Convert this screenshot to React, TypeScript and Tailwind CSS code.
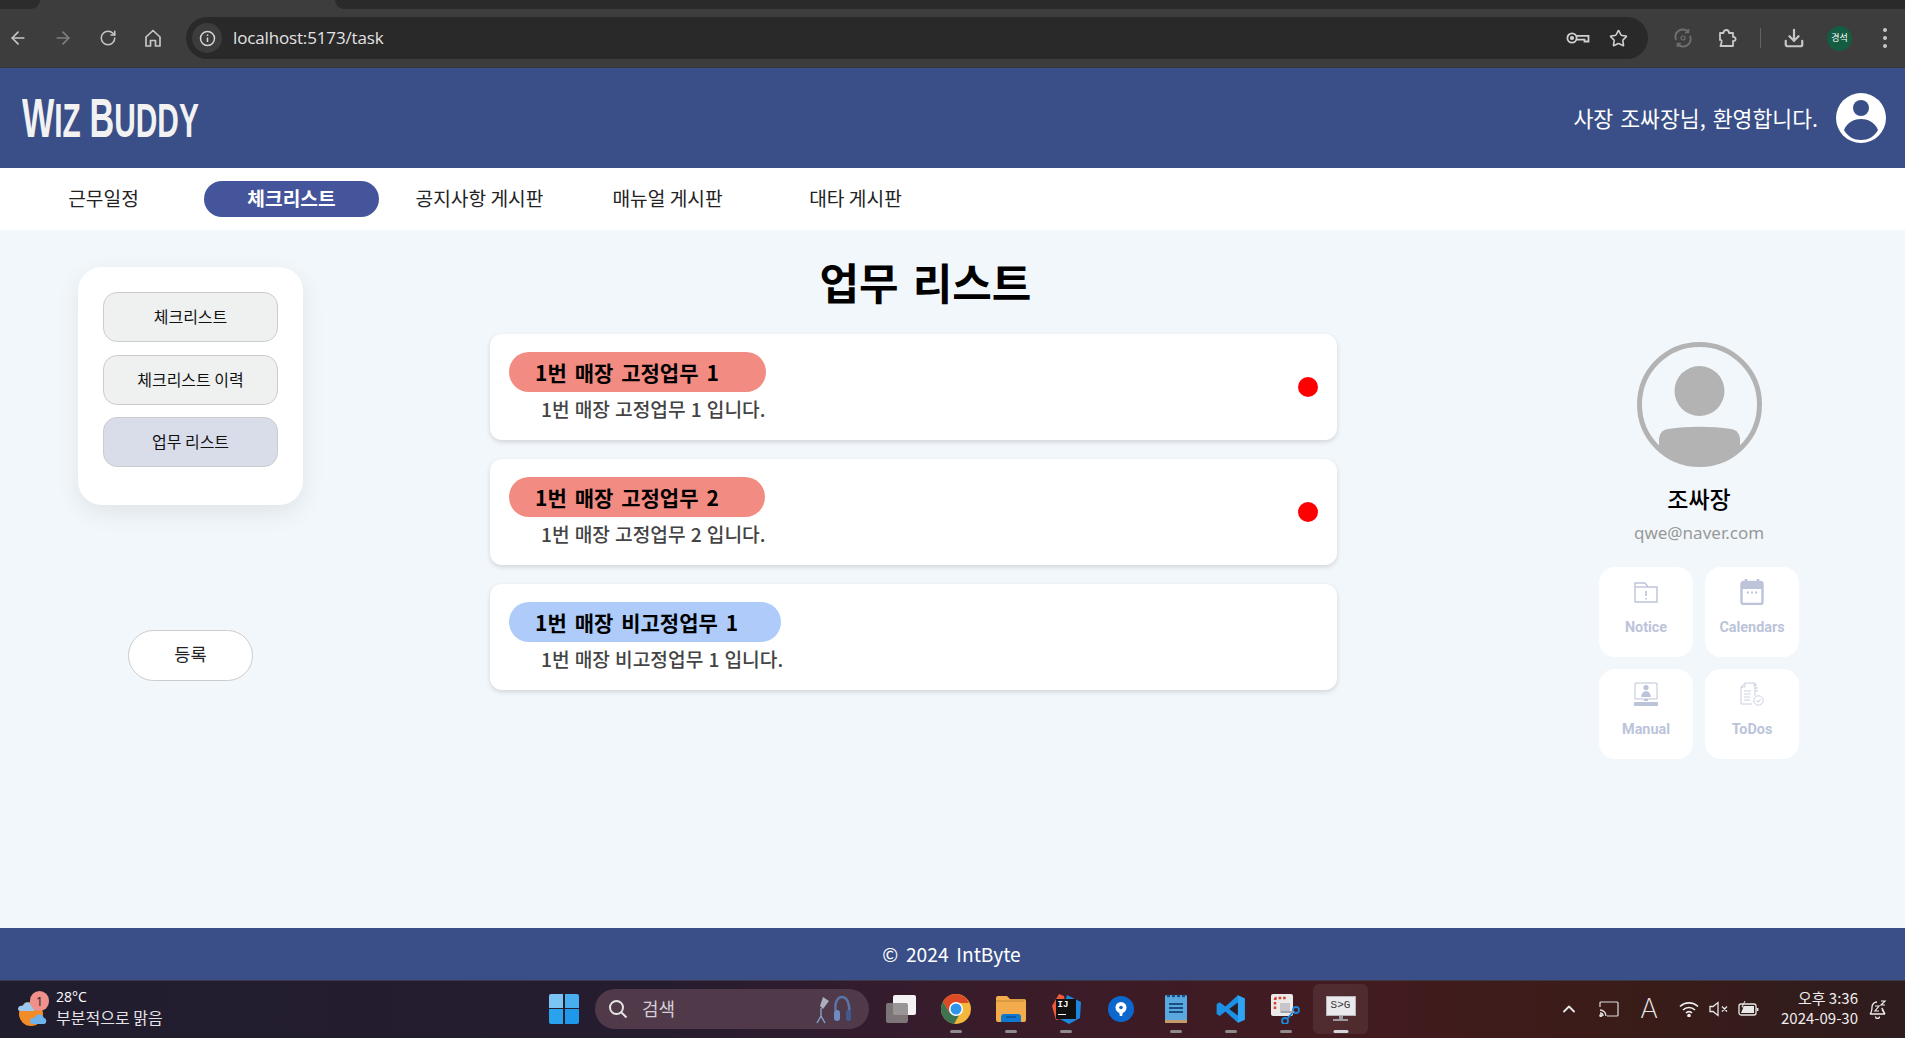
import React from "react";
import { ArrowLeft, ArrowRight, RotateCw, Star, Download, ChevronUp } from "lucide-react";

const KR = "font-['Noto_Sans_CJK_KR','Noto_Sans',sans-serif]";

function HomeIcon() {
  return (
    <svg width="18" height="20" viewBox="0 0 18 20" fill="none" stroke="#c7c7c7" strokeWidth="1.7">
      <path d="M2 9 9 2.5 16 9v9h-4.5v-5.5h-5V18H2z" strokeLinejoin="round" />
    </svg>
  );
}

function Chrome() {
  return (
    <div className="h-[68px] shrink-0 flex flex-col bg-[#3c3d3c] border-b border-[#35373c]">
      <div className="h-[9px] flex">
        <div className="w-[40px] bg-[#2c2c2c] rounded-br-xl" />
        <div className="w-[295px]" />
        <div className="flex-1 bg-[#2a2a2a] rounded-bl-xl" />
      </div>
      <div className="flex-1 flex items-center relative">
        <div className="w-[186px] flex items-center pl-[8px] text-[#c7c7c7] pb-[1px]">
          <ArrowLeft size={20} strokeWidth={2} />
          <ArrowRight size={20} strokeWidth={2} className="ml-[25px] text-[#7f7f7f]" />
          <RotateCw size={18} strokeWidth={2} className="ml-[26px]" />
          <div className="ml-[27px]"><HomeIcon /></div>
        </div>
        <div className="w-[1462px] h-[42px] bg-[#292929] rounded-full flex items-center pl-[6px]">
          <div className="w-[30px] h-[30px] rounded-full bg-[#3c3c3c] flex items-center justify-center">
            <svg width="17" height="17" viewBox="0 0 17 17" fill="none" stroke="#d5d5d5" strokeWidth="1.5">
              <circle cx="8.5" cy="8.5" r="7" />
              <path d="M8.5 7.5v4.5M8.5 4.5v1.4" />
            </svg>
          </div>
          <span className="ml-[11px] text-[17px] text-[#e3e3e3] font-['Open_Sans',sans-serif] tracking-[-0.15px]">localhost:5173/task</span>
          <div className="ml-auto flex items-center gap-[19px] pr-[20px]">
            <svg width="24" height="14" viewBox="0 0 24 14" fill="none" stroke="#d0d0d0" strokeWidth="1.8">
              <circle cx="6" cy="7" r="4.6" />
              <circle cx="6" cy="7" r="1.2" fill="#d0d0d0" />
              <path d="M10.5 4.8H22.5V10.5H18.5V8.6H10.5" />
            </svg>
            <Star size={19} className="text-[#d0d0d0]" strokeWidth={2} />
          </div>
        </div>
        <div className="flex items-center text-[#c7c7c7]">
          <svg className="ml-[25px]" width="20" height="20" viewBox="0 0 20 20" fill="none" stroke="#6e6e6e" strokeWidth="2">
            <path d="M3 12A7.5 7.5 0 0 1 15.500 4M17 8a7.500 7.500 0 0 1-12.500 8" />
            <path d="M15.500 1v3.500H12M4.500 19v-3.500H8" strokeWidth="1.600" />
            <circle cx="10" cy="10" r="2" strokeWidth="1.200" />
          </svg>
          <svg className="ml-[25px]" width="20" height="20" viewBox="0 0 20 20" fill="none" stroke="#c7c7c7" strokeWidth="1.800" strokeLinejoin="round">
            <path d="M2 5h3.500c0-4 5.500-4 5.500 0H15v4c3.500-.5 3.500 4.500 0 4v5H2.500l1-3.500c.8-2.800-.8-2.800-1.500-2.500z" />
          </svg>
          <div className="ml-[22px] w-[1px] h-[20px] bg-[#6b5f5f]" />
          <Download size={22} strokeWidth={2.400} className="ml-[22px]" />
          <div className={`ml-[22px] w-[25px] h-[25px] rounded-full bg-[#145c42] flex items-center justify-center text-[9px] text-white ${KR}`}>경석</div>
          <div className="ml-[31px] flex flex-col gap-[4px]">
            <span className="w-[4px] h-[4px] rounded-full bg-[#c7c7c7]" />
            <span className="w-[4px] h-[4px] rounded-full bg-[#c7c7c7]" />
            <span className="w-[4px] h-[4px] rounded-full bg-[#c7c7c7]" />
          </div>
        </div>
      </div>
    </div>
  );
}

function Header() {
  return (
    <header className="h-[100px] shrink-0 bg-[#3a4f87] flex items-center text-white">
      <div className="ml-[22px] w-[174px] shrink-0">
        <div className="w-max origin-left scale-x-[0.622] flex items-baseline leading-none font-['Liberation_Sans',sans-serif] font-bold text-[#f2f2f2]">
          <span className="text-[55px]">W</span>
          <span className="text-[48px]">IZ</span>
          <span className="text-[55px] ml-[14px]">B</span>
          <span className="text-[48px]">UDDY</span>
        </div>
      </div>
      <div className="ml-auto flex items-center mr-[19px]">
        <span className={`text-[21.6px] [word-spacing:0.1em] ${KR}`}>사장 조싸장님, 환영합니다.</span>
        <svg className="ml-[18px]" width="50" height="50" viewBox="0 0 50 50">
          <circle cx="25" cy="25" r="25" fill="#fff" />
          <circle cx="25" cy="15" r="8" fill="#3a4f87" />
          <path d="M8 37c3-8 11-11 17-11s14 3 17 11c-4 7-10 10-17 10S12 44 8 37z" fill="#3a4f87" />
        </svg>
      </div>
    </header>
  );
}

function Nav() {
  const items = ["근무일정", "체크리스트", "공지사항 게시판", "매뉴얼 게시판", "대타 게시판"];
  return (
    <nav className={`h-[62px] shrink-0 bg-white flex items-center gap-[13px] pl-[16px] ${KR}`}>
      {items.map((t, i) => (
        <div
          key={t}
          className={
            i === 1
              ? "w-[175px] h-[36px] pb-[2px] rounded-full bg-[#45559b] text-white font-bold text-[19.2px] flex items-center justify-center"
              : "w-[175px] h-[36px] pb-[2px] text-[#222] text-[19.2px] flex items-center justify-center"
          }
        >
          {t}
        </div>
      ))}
    </nav>
  );
}

function SideButton({ children, active, className }: { children: React.ReactNode; active?: boolean; className?: string }) {
  return (
    <div
      className={`w-[175px] h-[50px] pb-[3px] rounded-[14px] border border-[#cccccc] flex items-center justify-center text-[16px] text-[#111] ${
        active ? "bg-[#d9dde9]" : "bg-[#eff1f1]"
      } ${className ?? ""}`}
    >
      {children}
    </div>
  );
}

function Sidebar() {
  return (
    <aside className={`w-[225px] shrink-0 pt-[37px] ${KR}`}>
      <div className="h-[238px] rounded-[24px] bg-white shadow-[0_8px_24px_rgba(0,0,0,0.08)] pt-[25px] pl-[25px]">
        <SideButton className="mb-[13px]">체크리스트</SideButton>
        <SideButton className="mb-[12px]">체크리스트 이력</SideButton>
        <SideButton active>업무 리스트</SideButton>
      </div>
      <div className="mt-[125px] mx-auto w-[125px] h-[51px] pb-[2px] rounded-full bg-white border border-[#cccccc] flex items-center justify-center text-[17.6px] text-[#222]">
        등록
      </div>
    </aside>
  );
}

function TaskCard({ title, desc, color, dot, pad }: { title: string; desc: string; color: string; dot?: boolean; pad: string }) {
  return (
    <div className="h-[106px] rounded-[12px] bg-white shadow-[0_2px_5px_rgba(0,0,0,0.14)] pl-[19px] pr-[19px] pt-[18px] flex items-center">
      <div className="self-start flex flex-col items-start">
        <div className={`h-[40px] pl-[26px] pt-[1px] rounded-full flex items-center text-[21px] [word-spacing:0.15em] font-bold text-black ${pad} ${color}`}>{title}</div>
        <div className="mt-[5px] pl-[32px] text-[19.2px] leading-[24px] [word-spacing:0.04em] font-medium text-[#444]">{desc}</div>
      </div>
      {dot && <div className="ml-auto mb-[18px] w-[20px] h-[20px] rounded-full bg-[#ff0000]" />}
    </div>
  );
}

function Center() {
  return (
    <section className={`w-[847px] shrink-0 ml-[187px] ${KR}`}>
      <h1 className="h-[104px] pl-[24px] pb-[2px] flex items-center justify-center text-[43px] [word-spacing:0.1em] font-bold text-black">업무 리스트</h1>
      <div className="flex flex-col gap-[19px]">
        <TaskCard title="1번 매장 고정업무 1" desc="1번 매장 고정업무 1 입니다." color="bg-[#f28b82]" pad="pr-[47px]" dot />
        <TaskCard title="1번 매장 고정업무 2" desc="1번 매장 고정업무 2 입니다." color="bg-[#f28b82]" pad="pr-[46px]" dot />
        <TaskCard title="1번 매장 비고정업무 1" desc="1번 매장 비고정업무 1 입니다." color="bg-[#aecbfa]" pad="pr-[43px]" />
      </div>
    </section>
  );
}

const ICON = "#bcc4d9";

function NoticeIcon() {
  return (
    <svg width="24" height="24" viewBox="0 0 24 24" fill="none" stroke={ICON} strokeWidth="1.4">
      <path d="M1 22V3h10l3 4h9v15z" />
      <path d="M1 7h13" />
      <path d="M12 11v5M12 18v1.5" strokeWidth="1.6" />
    </svg>
  );
}
function CalendarIcon() {
  return (
    <svg width="24" height="26" viewBox="0 0 24 26" fill="none">
      <rect x="1.5" y="3" width="21" height="22" rx="2" stroke={ICON} strokeWidth="2.4" />
      <path d="M1.5 4h21v6h-21z" fill={ICON} />
      <path d="M6 0v4M18 0v4" stroke={ICON} strokeWidth="2.4" />
      <path d="M7 13.5h2M11 13.5h2M15 13.5h2" stroke={ICON} strokeWidth="1.8" />
    </svg>
  );
}
function ManualIcon() {
  return (
    <svg width="24" height="24" viewBox="0 0 24 24" fill="none">
      <path d="M1 1h22v16H1z" stroke={ICON} strokeWidth="1" />
      <circle cx="12" cy="5.5" r="2.6" fill={ICON} />
      <path d="M7 15c.5-4 2.5-6 5-6s4.5 2 5 6z" fill={ICON} />
      <path d="M10 17h4v2h-4zM0 20h24v4H0z" fill={ICON} />
    </svg>
  );
}
function TodosIcon() {
  return (
    <svg width="24" height="24" viewBox="0 0 24 24" fill="none" stroke={ICON} strokeWidth="0.8">
      <path d="M15 14V1H5L1 5v17h11" />
      <path d="M1 5h4V1M4 9h7M4 12h7M4 15h6M4 18h6M13 3h4M15 6h3M15 9h3" />
      <circle cx="18.5" cy="18.5" r="4.7" fill="#fff" />
      <path d="m16.3 18.5 1.6 1.6 2.8-2.8" strokeWidth="1" />
    </svg>
  );
}

function Tile({ icon, label }: { icon: React.ReactNode; label: string }) {
  return (
    <div className="w-[94px] h-[90px] rounded-[16px] bg-white flex flex-col items-center pt-[11px]">
      <div className="h-[28px] flex items-center">{icon}</div>
      <div className="mt-[11px] text-[14.4px] font-bold text-[#bcc4d9] font-['Roboto',sans-serif]">{label}</div>
    </div>
  );
}

function Profile() {
  return (
    <aside className={`w-[200px] shrink-0 ml-[262px] pt-[112px] flex flex-col items-center ${KR}`}>
      <svg width="125" height="125" viewBox="0 0 125 125">
        <circle cx="62.5" cy="62.5" r="60" fill="none" stroke="#b3b3b3" strokeWidth="5" />
        <circle cx="62.5" cy="49" r="25" fill="#b3b3b3" />
        <path d="M22 105V98c0-6 3-10 9-11 20-3 43-3 63 0 6 1 9 5 9 11v7c-10 11-25 18-40.500 18S32 116 22 105z" fill="#b3b3b3" />
      </svg>
      <div className="mt-[15px] text-[23px] leading-[32px] font-medium text-black">조싸장</div>
      <div className="mt-[7px] text-[17px] leading-[24px] text-[#999] font-['Noto_Sans',sans-serif]">qwe@naver.com</div>
      <div className="mt-[22px] w-[200px] grid grid-cols-[94px_94px] gap-x-[12px] gap-y-[12px] justify-center">
        <Tile icon={<NoticeIcon />} label="Notice" />
        <Tile icon={<CalendarIcon />} label="Calendars" />
        <Tile icon={<ManualIcon />} label="Manual" />
        <Tile icon={<TodosIcon />} label="ToDos" />
      </div>
    </aside>
  );
}

function Main() {
  return (
    <main className="flex-1 min-h-0 bg-[#f2f7fb] flex pl-[78px]">
      <Sidebar />
      <Center />
      <Profile />
    </main>
  );
}

function Footer() {
  return (
    <footer className={`h-[52px] shrink-0 bg-[#3a4f87] flex items-center justify-center pr-[2px] text-white text-[19.2px] [word-spacing:0.18em] ${KR}`}>
      © 2024 IntByte
    </footer>
  );
}

function Weather() {
  return (
    <div className="relative w-[30px] h-[36px] ml-[17px]">
      <svg width="30" height="36" viewBox="0 0 30 36">
        <circle cx="14" cy="22" r="12" fill="#f28c28" />
        <path d="M1 17c0-3 3-4 5-3 1-5 7-5 9 0 3 0 4 3 2 5H3c-1 0-2-1-2-2z" fill="#9cc9ef" />
        <path d="M13 29c0-3 3-4 5-3 1-5 7-5 9 0 3 0 3 6 0 6H15c-1 0-2-2-2-3z" fill="#6fb3ec" />
      </svg>
      <div className="absolute -top-[1px] left-[13px] w-[19px] h-[20px] rounded-full bg-[#f0908a] text-[#222] text-[13px] leading-[20px] text-center font-['Open_Sans',sans-serif]">1</div>
    </div>
  );
}

function WinLogo() {
  return (
    <div className="grid grid-cols-2 gap-[1.5px] w-[30px] h-[30px]">
      <div className="bg-[#7cc4f3] rounded-tl-[2px]" />
      <div className="bg-[#49aef0] rounded-tr-[2px]" />
      <div className="bg-[#2aa3ef] rounded-bl-[2px]" />
      <div className="bg-[#1f97ea] rounded-br-[2px]" />
    </div>
  );
}

function Indicator({ active }: { active?: boolean }) {
  return <div className={`absolute left-1/2 -translate-x-1/2 bottom-[1px] h-[3px] rounded-full ${active ? "w-[15px] bg-[#d8d4dc]" : "w-[12px] bg-[#8f8a8c]"}`} />;
}

function TaskSlot({ children, on, active }: { children: React.ReactNode; on?: boolean; active?: boolean }) {
  return (
    <div className={`relative w-[55px] h-[50px] flex items-center justify-center rounded-[6px] ${active ? "bg-[#ffffff12]" : ""}`}>
      {children}
      {on && <Indicator active={active} />}
    </div>
  );
}

function ChromeLogo() {
  return (
    <svg width="30" height="30" viewBox="0 0 30 30">
      <circle cx="15" cy="15" r="15" fill="#f5b63c" />
      <path d="M15 0a15 15 0 0 0-12.990 7.500L8.500 18.700 15 9h13a15 15 0 0 0-13-9z" fill="#dd4b26" />
      <path d="M2 7.500a15 15 0 0 0 11 22.400l6.500-11.200L8.500 18.700z" fill="#3d7350" />
      <circle cx="15" cy="15" r="7" fill="#fff" />
      <circle cx="15" cy="15" r="5.500" fill="#2d95ea" />
    </svg>
  );
}

function Taskbar() {
  return (
    <div className="h-[58px] shrink-0 flex items-center text-white bg-[linear-gradient(90deg,#201d2e_0%,#261c30_35%,#361c2c_48%,#431b20_70%,#3a1c18_85%,#2e1c1e_100%)] border-t border-[#3d3a48] font-['Noto_Sans_CJK_KR',sans-serif]">
      <Weather />
      <div className="ml-[9px] mb-[4px] w-[130px] leading-none">
        <div className="text-[14px] text-white font-['Open_Sans',sans-serif]">28°C</div>
        <div className="mt-[5px] text-[16px] text-[#e6e2e6]">부분적으로 맑음</div>
      </div>
      <div className="ml-[363px] mb-[2px]"><WinLogo /></div>
      <div className="ml-[16px] mb-[2px] w-[274px] h-[40px] rounded-full bg-[#503a4a] flex items-center pl-[13px] relative">
        <svg width="20" height="20" viewBox="0 0 20 20" fill="none" stroke="#e5e5e5" strokeWidth="2">
          <circle cx="8.500" cy="8.500" r="6.500" />
          <path d="m13.500 13.500 5 5" />
        </svg>
        <span className="ml-[14px] text-[18px] text-[#d6d0d6]">검색</span>
        <svg className="ml-auto mr-[14px]" width="46" height="30" viewBox="0 0 46 30" fill="none">
          <path d="M14 3l6 4-6 8-3-3z" fill="#a9aec0" />
          <path d="M12 14v8M12 22l-4 7M12 22l4 7" stroke="#8ca5d8" strokeWidth="1.300" />
          <path d="M27 18c-2-8 1-15 6-15s8 7 7 15" stroke="#5a74a8" strokeWidth="2.500" />
          <rect x="25" y="16" width="6" height="11" rx="3" fill="#6f8bc4" />
          <rect x="37" y="16" width="5" height="11" rx="2.500" fill="#3f5a90" />
        </svg>
      </div>
      <div className="ml-[17px] mb-[2px] w-[30px] h-[28px] relative">
        <div className="absolute right-0 top-0 w-[23px] h-[20px] rounded-[2px] bg-[#f4f2f2]" />
        <div className="absolute left-0 bottom-0 w-[22px] h-[20px] rounded-[2px] bg-[#8a8585d9]" />
      </div>
      <div className="ml-[12px] mb-[2px] flex items-center">
        <TaskSlot on><ChromeLogo /></TaskSlot>
        <TaskSlot on>
          <svg width="30" height="26" viewBox="0 0 30 26">
            <path d="M0 2a2 2 0 0 1 2-2h9l3 3h14a2 2 0 0 1 2 2v19a2 2 0 0 1-2 2H2a2 2 0 0 1-2-2z" fill="#f4ab4c" />
            <path d="M0 4h14V3H28v3H0z" fill="#d99a42" />
            <path d="M5 26v-5a3 3 0 0 1 3-3h14a3 3 0 0 1 3 3v5z" fill="#0f78d0" />
            <path d="M10 21h10" stroke="#0b4f8f" strokeWidth="1.500" />
          </svg>
        </TaskSlot>
        <TaskSlot on>
          <div className="relative w-[30px] h-[30px]">
            <svg className="absolute inset-0" width="30" height="30" viewBox="0 0 30 30">
              <path d="M8 0 1 12l4 14 12-3L13 2z" fill="#ef5a3a" />
              <path d="M16 1 30 8l-1 16-11 6-9-5z" fill="#1b87dd" />
            </svg>
            <div className="absolute left-[5px] top-[5px] w-[20px] h-[20px] bg-[#111] text-white text-[9px] leading-[12px] font-bold pl-[2px] font-['Liberation_Mono',monospace]">
              IJ
              <div className="w-[8px] h-[1.500px] bg-white mt-[3px]" />
            </div>
          </div>
        </TaskSlot>
        <TaskSlot>
          <svg width="26" height="26" viewBox="0 0 26 26">
            <circle cx="13" cy="13" r="13" fill="#0c68cc" />
            <circle cx="13" cy="11.500" r="5.500" fill="#fff" />
            <circle cx="13" cy="11.500" r="1.800" fill="#0c68cc" />
            <path d="M11 15h4l-.8 5h-2.400z" fill="#fff" />
          </svg>
        </TaskSlot>
        <TaskSlot on>
          <svg width="22" height="30" viewBox="0 0 22 30">
            <rect x="0" y="1" width="22" height="28" rx="1.500" fill="#5aa8e0" />
            <path d="M0 26h22v3H0z" fill="#c59a6a" />
            <path d="M4 10h14M4 14h14M4 18h14" stroke="#1a4f80" strokeWidth="1.800" />
            <path d="M3 2h1M8 2h1M13 2h1M18 2h1" stroke="#1a4f80" strokeWidth="2.400" strokeLinecap="round" />
          </svg>
        </TaskSlot>
        <TaskSlot on>
          <svg width="30" height="30" viewBox="0 0 24 24">
            <path d="M17.500 1 23 3.500v17L17.500 23 7.500 14l-4.500 3.500L.5 16V8L3 6.500 7.500 10z" fill="#1c8fe6" />
            <path d="M17.500 1 23 3.500v17L17.500 23z" fill="#2fa4f2" />
            <path d="M17.500 6.800 10.500 12l7 5.200z" fill="#2b1b24" />
          </svg>
        </TaskSlot>
        <TaskSlot on>
          <svg width="30" height="30" viewBox="0 0 30 30" fill="none">
            <rect x="0" y="0" width="22" height="22" rx="2" fill="#ece9e9" />
            <path d="M4 15V6a2 2 0 0 1 2-2h9" stroke="#d8402c" strokeWidth="2.500" strokeDasharray="2.500 2" />
            <path d="M9 9h10v10H9z" fill="#c7c5c9" />
            <circle cx="25" cy="16" r="3" stroke="#1b87dd" strokeWidth="1.800" />
            <circle cx="14" cy="27" r="3" stroke="#1b87dd" strokeWidth="1.800" />
            <path d="M16 25 23 17" stroke="#1b87dd" strokeWidth="1.800" />
            <path d="M10 18h13" stroke="#9aa0a8" strokeWidth="1.800" />
          </svg>
        </TaskSlot>
        <TaskSlot on active>
          <div className="flex flex-col items-center">
            <div className="w-[30px] h-[20px] bg-[#e9e9ec] border-[1.500px] border-[#b5b5bb] text-[#333] text-[11px] leading-[17px] text-center font-['Liberation_Mono',monospace]">S&gt;G</div>
            <div className="w-[4px] h-[3px] bg-[#9a9aa0]" />
            <div className="w-[15px] h-[2px] bg-[#9a9aa0]" />
          </div>
        </TaskSlot>
      </div>
      <ChevronUp size={20} strokeWidth={2.200} className="ml-[191px] mb-[2px] text-[#e8e8e8]" />
      <svg className="ml-[20px] mb-[2px]" width="20" height="16" viewBox="0 0 20 16" fill="none" stroke="#dedede" strokeWidth="1.200">
        <path d="M1 6V2a1 1 0 0 1 1-1h16a1 1 0 0 1 1 1v12a1 1 0 0 1-1 1H8" />
        <path d="M1 9a6 6 0 0 1 6 6M1 12a3 3 0 0 1 3 3" strokeWidth="1.400" />
        <circle cx="1.800" cy="14.500" r="1" fill="#dedede" />
      </svg>
      <span className="ml-[20px] mb-[2px] w-[20px] text-center text-[27px] leading-none text-[#e8e8e8] font-['Inter',sans-serif] font-extralight">A</span>
      <svg className="ml-[20px] mb-[2px]" width="20" height="16" viewBox="0 0 20 16" fill="none" stroke="#f0f0f0" strokeWidth="1.600">
        <path d="M1 5.500a13 13 0 0 1 18 0M4 9a8.500 8.500 0 0 1 12 0M7 12a4 4 0 0 1 6 0" />
        <circle cx="10" cy="14.500" r="1" fill="#f0f0f0" />
      </svg>
      <svg className="ml-[10px] mb-[2px]" width="20" height="16" viewBox="0 0 20 16" fill="none" stroke="#e8e8e8" strokeWidth="1.300">
        <path d="M1 5.500h3L9 1.500v13L4 10.500H1zM13 5.500l5 5M18 5.500l-5 5" />
      </svg>
      <svg className="ml-[9px] mb-[2px]" width="22" height="16" viewBox="0 0 22 16">
        <rect x="1" y="3" width="17" height="11" rx="2" fill="none" stroke="#e8e8e8" strokeWidth="1.300" />
        <path d="M3 12 6 5h10v7z" fill="#e8e8e8" />
        <path d="M19.500 7v3" stroke="#e8e8e8" strokeWidth="1.800" />
        <path d="M7 0 4 6h3L5 10" stroke="#e8e8e8" strokeWidth="1" fill="none" />
      </svg>
      <div className="w-[98px] mb-[4px] text-right leading-none text-[15px] text-[#f0eeee]">
        <div className="mb-[5px]">오후 3:36</div>
        <div>2024-09-30</div>
      </div>
      <svg className="ml-[11px] mb-[2px]" width="18" height="20" viewBox="0 0 18 20" fill="none" stroke="#ececec" strokeWidth="1.300">
        <path d="M1 15c2-2 2-4 2-7a5 5 0 0 1 5-5M13 9c0 3 1 4 3 6zM1 15h15M6.500 17.500a2 2 0 0 0 4 0" />
        <path d="M6 7h4l-4 5h4M12 2h4l-4 4h4" strokeWidth="1.200" />
      </svg>
    </div>
  );
}

export default function App() {
  return (
    <div className="h-[1038px] w-[1905px] flex flex-col overflow-hidden">
      <Chrome />
      <Header />
      <Nav />
      <Main />
      <Footer />
      <Taskbar />
    </div>
  );
}
